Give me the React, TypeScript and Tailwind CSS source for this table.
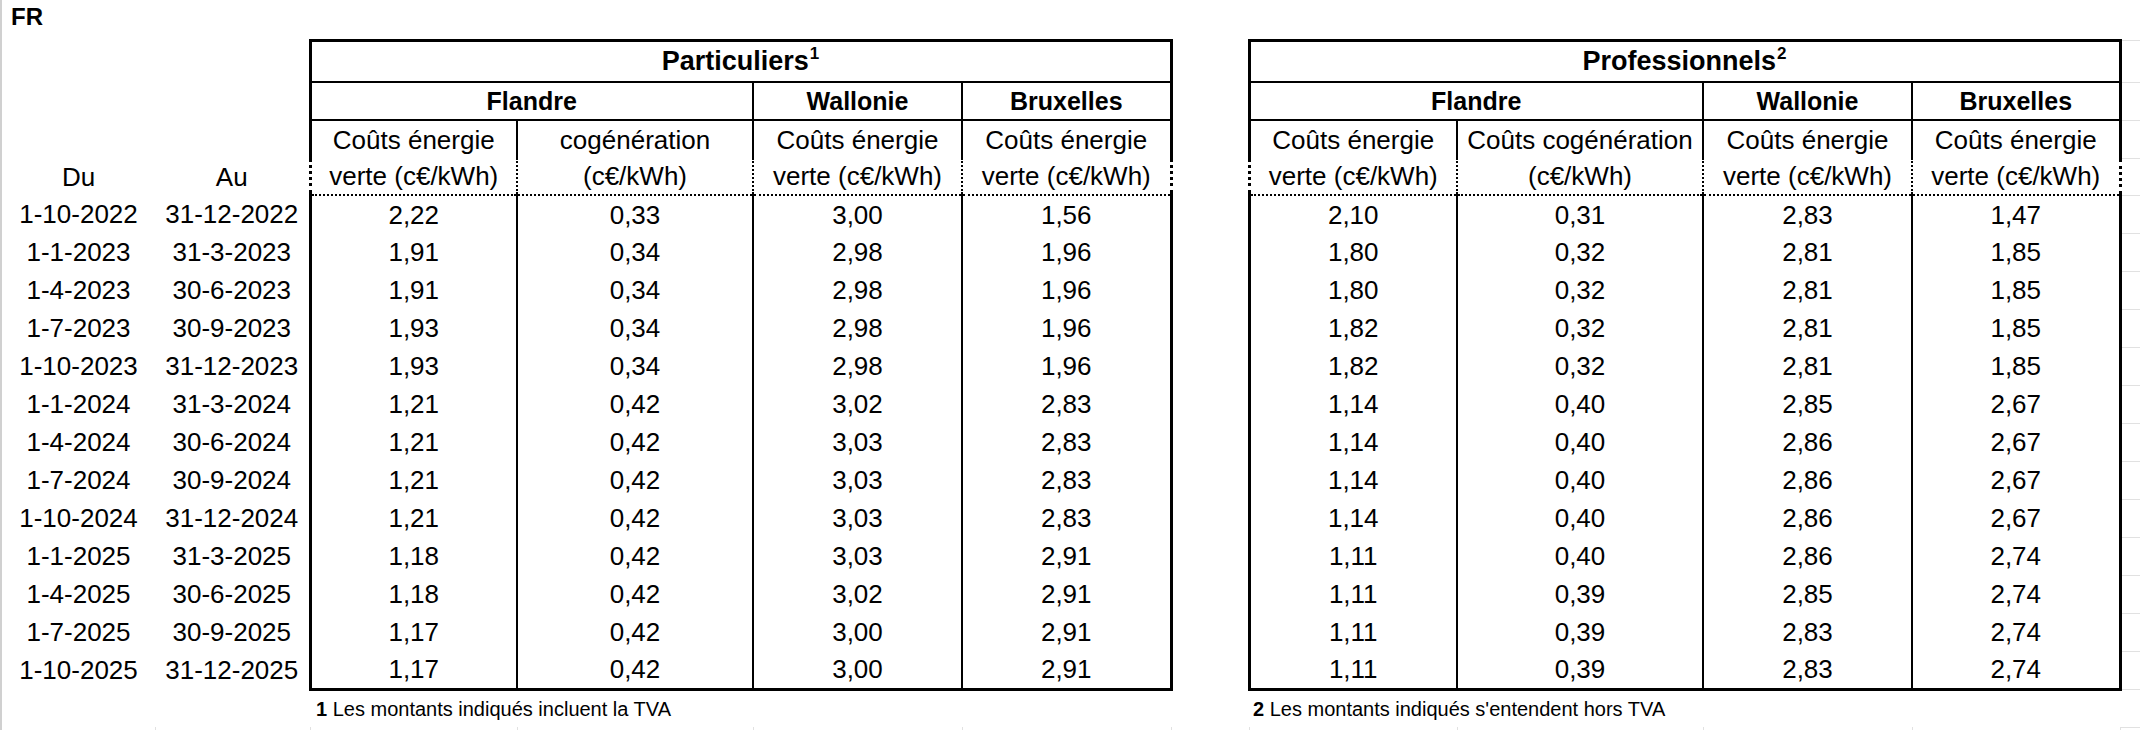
import React from "react";

// Excel-like sheet: green energy / cogeneration costs per region
const rows: string[][] = [
  ["1-10-2022", "31-12-2022", "2,22", "0,33", "3,00", "1,56", "2,10", "0,31", "2,83", "1,47"],
  ["1-1-2023", "31-3-2023", "1,91", "0,34", "2,98", "1,96", "1,80", "0,32", "2,81", "1,85"],
  ["1-4-2023", "30-6-2023", "1,91", "0,34", "2,98", "1,96", "1,80", "0,32", "2,81", "1,85"],
  ["1-7-2023", "30-9-2023", "1,93", "0,34", "2,98", "1,96", "1,82", "0,32", "2,81", "1,85"],
  ["1-10-2023", "31-12-2023", "1,93", "0,34", "2,98", "1,96", "1,82", "0,32", "2,81", "1,85"],
  ["1-1-2024", "31-3-2024", "1,21", "0,42", "3,02", "2,83", "1,14", "0,40", "2,85", "2,67"],
  ["1-4-2024", "30-6-2024", "1,21", "0,42", "3,03", "2,83", "1,14", "0,40", "2,86", "2,67"],
  ["1-7-2024", "30-9-2024", "1,21", "0,42", "3,03", "2,83", "1,14", "0,40", "2,86", "2,67"],
  ["1-10-2024", "31-12-2024", "1,21", "0,42", "3,03", "2,83", "1,14", "0,40", "2,86", "2,67"],
  ["1-1-2025", "31-3-2025", "1,18", "0,42", "3,03", "2,91", "1,11", "0,40", "2,86", "2,74"],
  ["1-4-2025", "30-6-2025", "1,18", "0,42", "3,02", "2,91", "1,11", "0,39", "2,85", "2,74"],
  ["1-7-2025", "30-9-2025", "1,17", "0,42", "3,00", "2,91", "1,11", "0,39", "2,83", "2,74"],
  ["1-10-2025", "31-12-2025", "1,17", "0,42", "3,00", "2,91", "1,11", "0,39", "2,83", "2,74"],
];

const colWidths = [153, 155, 207, 236, 209, 209, 78, 208, 246, 209, 208, 22];

// grid line cell in column L (outside the formatted range)
const Spare = () => <td className="border-b border-[#e1e1e1]" />;

export default function App() {
  return (
    <div className="w-[2140px] h-[730px] overflow-hidden bg-white text-black font-['Liberation_Sans',Arial,sans-serif] border-l-2 border-[#d0d0d0]">
      <table className="table-fixed border-collapse w-[2140px]">
        <colgroup>
          {colWidths.map((w, i) => (
            <col key={i} style={{ width: w }} />
          ))}
        </colgroup>
        <tbody className="text-[26px] leading-none">
          {/* row 1 */}
          <tr className="h-[40px]">
            <td className="pl-[9px] pb-[6px] align-middle text-[24px] font-bold">FR</td>
            <td colSpan={10} />
            <Spare />
          </tr>

          {/* row 2 */}
          <tr className="h-[42px] font-bold text-[27px]">
            <td colSpan={2} />
            <td colSpan={4} className="border-[3px] border-b-2 border-black text-center">
              Particuliers<sup className="text-[17px] -top-[11px] ml-[1px]">1</sup>
            </td>
            <td />
            <td colSpan={4} className="border-[3px] border-b-2 border-black text-center">
              Professionnels<sup className="text-[17px] -top-[11px] ml-[1px]">2</sup>
            </td>
            <Spare />
          </tr>

          {/* row 3 */}
          <tr className="h-[38px] font-bold text-[25px]">
            <td colSpan={2} />
            <td colSpan={2} className="border-2 border-l-[3px] border-black text-center">Flandre</td>
            <td className="border-2 border-black text-center">Wallonie</td>
            <td className="border-2 border-r-[3px] border-black text-center">Bruxelles</td>
            <td />
            <td colSpan={2} className="border-2 border-l-[3px] border-black text-center">Flandre</td>
            <td className="border-2 border-black text-center">Wallonie</td>
            <td className="border-2 border-r-[3px] border-black text-center">Bruxelles</td>
            <Spare />
          </tr>

          {/* row 4 */}
          <tr className="h-[38px]">
            <td colSpan={2} />
            <td className="border-l-[3px] border-r-2 border-black text-center">Coûts énergie</td>
            <td className="border-x-2 border-black text-center">cogénération</td>
            <td className="border-x-2 border-black text-center">Coûts énergie</td>
            <td className="border-l-2 border-r-[3px] border-black text-center">Coûts énergie</td>
            <td />
            <td className="border-l-[3px] border-r-2 border-black text-center">Coûts énergie</td>
            <td className="border-x-2 border-black text-center whitespace-nowrap">Coûts cogénération</td>
            <td className="border-x-2 border-black text-center">Coûts énergie</td>
            <td className="border-l-2 border-r-[3px] border-black text-center">Coûts énergie</td>
            <Spare />
          </tr>

          {/* row 5 */}
          <tr className="h-[37px]">
            <td className="text-center">Du</td>
            <td className="text-center">Au</td>
            <td className="border-l-[3px] border-r-2 border-b-2 border-dotted border-l-solid border-r-solid border-black text-center">
              verte (c€/kWh)
            </td>
            <td className="border-x-2 border-b-2 border-dotted border-x-solid border-black text-center">(c€/kWh)</td>
            <td className="border-x-2 border-b-2 border-dotted border-x-solid border-black text-center">verte (c€/kWh)</td>
            <td className="border-l-2 border-r-[3px] border-b-2 border-dotted border-l-solid border-r-solid border-black text-center">
              verte (c€/kWh)
            </td>
            <td />
            <td className="border-l-[3px] border-r-2 border-b-2 border-dotted border-l-solid border-r-solid border-black text-center">
              verte (c€/kWh)
            </td>
            <td className="border-x-2 border-b-2 border-dotted border-x-solid border-black text-center">(c€/kWh)</td>
            <td className="border-x-2 border-b-2 border-dotted border-x-solid border-black text-center">verte (c€/kWh)</td>
            <td className="border-l-2 border-r-[3px] border-b-2 border-dotted border-l-solid border-r-solid border-black text-center">
              verte (c€/kWh)
            </td>
            <Spare />
          </tr>

          {/* data rows */}
          {rows.map((r, i) => {
            const last = i === rows.length - 1;
            const bottom = last ? "border-b-[3px]" : "";
            return (
              <tr key={i} className="h-[38px]">
                <td className="text-center whitespace-nowrap">{r[0]}</td>
                <td className="text-center whitespace-nowrap">{r[1]}</td>
                <td className={`border-l-[3px] border-r-2 border-black text-center ${bottom}`}>{r[2]}</td>
                <td className={`border-x-2 border-black text-center ${bottom}`}>{r[3]}</td>
                <td className={`border-x-2 border-black text-center ${bottom}`}>{r[4]}</td>
                <td className={`border-l-2 border-r-[3px] border-black text-center ${bottom}`}>{r[5]}</td>
                <td />
                <td className={`border-l-[3px] border-r-2 border-black text-center ${bottom}`}>{r[6]}</td>
                <td className={`border-x-2 border-black text-center ${bottom}`}>{r[7]}</td>
                <td className={`border-x-2 border-black text-center ${bottom}`}>{r[8]}</td>
                <td className={`border-l-2 border-r-[3px] border-black text-center ${bottom}`}>{r[9]}</td>
                <Spare />
              </tr>
            );
          })}

          {/* footnotes */}
          <tr className="h-[38px] text-[20px]">
            <td colSpan={2} />
            <td colSpan={4} className="pl-[6px] whitespace-nowrap">
              <span className="font-bold">1</span> Les montants indiqués incluent la TVA
            </td>
            <td />
            <td colSpan={4} className="pl-[4px] whitespace-nowrap">
              <span className="font-bold">2</span> Les montants indiqués s'entendent hors TVA
            </td>
            <Spare />
          </tr>

          {/* next row, only grid lines visible */}
          <tr className="h-[10px]">
            {colWidths.map((_, i) => (
              <td key={i} className="border-r border-[#e1e1e1]" />
            ))}
          </tr>
        </tbody>
      </table>
    </div>
  );
}
